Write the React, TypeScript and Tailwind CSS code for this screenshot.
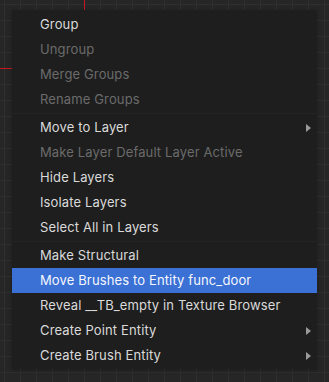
import React from 'react'

type Item =
  | { kind: 'item'; label: string; disabled?: boolean; submenu?: boolean; active?: boolean }
  | { kind: 'sep' }

const items: Item[] = [
  { kind: 'item', label: 'Group' },
  { kind: 'item', label: 'Ungroup', disabled: true },
  { kind: 'item', label: 'Merge Groups', disabled: true },
  { kind: 'item', label: 'Rename Groups', disabled: true },
  { kind: 'sep' },
  { kind: 'item', label: 'Move to Layer', submenu: true },
  { kind: 'item', label: 'Make Layer Default Layer Active', disabled: true },
  { kind: 'item', label: 'Hide Layers' },
  { kind: 'item', label: 'Isolate Layers' },
  { kind: 'item', label: 'Select All in Layers' },
  { kind: 'sep' },
  { kind: 'item', label: 'Make Structural' },
  { kind: 'item', label: 'Move Brushes to Entity func_door', active: true },
  { kind: 'item', label: 'Reveal __TB_empty in Texture Browser' },
  { kind: 'item', label: 'Create Point Entity', submenu: true },
  { kind: 'item', label: 'Create Brush Entity', submenu: true },
]

function GridCanvas() {
  // editor viewport grid behind the context menu, 16px cells
  return (
    <svg className="absolute inset-0" width="329" height="382">
      <defs>
        <pattern id="grid" x="4" y="4" width="16" height="16" patternUnits="userSpaceOnUse">
          <path d="M 0 0.5 H 16 M 0.5 0 V 16" stroke="#2f2f2f" strokeWidth="1" fill="none" />
        </pattern>
      </defs>
      <rect width="329" height="382" fill="#262626" />
      <rect width="329" height="382" fill="url(#grid)" />
      {/* axis stubs, the rest is hidden by the menu */}
      <line x1="0" y1="68.5" x2="14" y2="68.5" stroke="#c8161d" strokeWidth="1" />
      <line x1="84.5" y1="0" x2="84.5" y2="12" stroke="#c8161d" strokeWidth="1" />
    </svg>
  )
}

function Arrow() {
  return (
    <svg width="5" height="8" viewBox="0 0 5 8" className="absolute right-[6px] top-[9px]">
      <path d="M0 0 L5 4 L0 8 Z" fill="#9a9a9a" />
    </svg>
  )
}

export default function App() {
  return (
    <div
      className="relative w-[329px] h-[382px] overflow-hidden bg-[#262626]"
      style={{ fontFamily: 'Inter, "Noto Sans", sans-serif' }}
    >
      <GridCanvas />
      <div className="absolute left-[12px] top-[10px] w-[305px] h-[359px] bg-[#1e1e1e] pt-[2px] shadow-[0_1px_4px_rgba(0,0,0,0.3)]">
        {items.map((it, i) =>
          it.kind === 'sep' ? (
            <div key={i} className="h-[3px] flex items-center">
              <div className="h-px w-full bg-[#242424]" />
            </div>
          ) : (
            <div
              key={i}
              className={
                'relative h-[25px] flex items-center pl-[28px] text-[13px] leading-none tracking-[0.01em] ' +
                (it.active
                  ? 'bg-[#3b70d4] text-[#f4f7ff]'
                  : it.disabled
                    ? 'text-[#6b6b6b]'
                    : 'text-[#dadada]')
              }
            >
              {it.label}
              {it.submenu && <Arrow />}
            </div>
          )
        )}
      </div>
    </div>
  )
}
